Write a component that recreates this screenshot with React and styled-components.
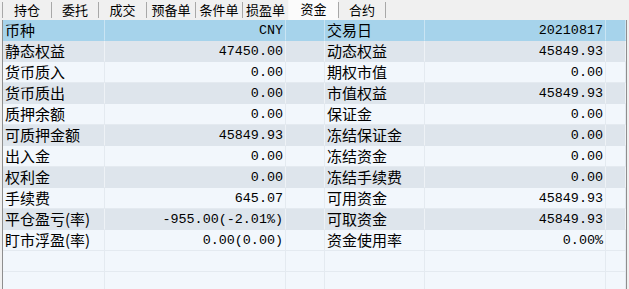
import React from "react";
import styled, { createGlobalStyle } from "styled-components";

const tabs = [
  { name: "持仓", w: 49 },
  { name: "委托", w: 47 },
  { name: "成交", w: 48 },
  { name: "预备单", w: 49 },
  { name: "条件单", w: 47 },
  { name: "损盈单", w: 46 },
  { name: "资金", w: 50, active: true },
  { name: "合约", w: 48 },
];

const rows = [
  ["静态权益", "47450.00", "动态权益", "45849.93"],
  ["货币质入", "0.00", "期权市值", "0.00"],
  ["货币质出", "0.00", "市值权益", "45849.93"],
  ["质押余额", "0.00", "保证金", "0.00"],
  ["可质押金额", "45849.93", "冻结保证金", "0.00"],
  ["出入金", "0.00", "冻结资金", "0.00"],
  ["权利金", "0.00", "冻结手续费", "0.00"],
  ["手续费", "645.07", "可用资金", "45849.93"],
  ["平仓盈亏(率)", "-955.00(-2.01%)", "可取资金", "45849.93"],
  ["盯市浮盈(率)", "0.00(0.00)", "资金使用率", "0.00%"],
];

export default function App() {
  return (
    <>
      <GlobalStyle />
      <Frame>
        <TabBar>
          {tabs.map((t) => (
            <Tab key={t.name} $w={t.w} $active={t.active}>
              {t.name}
            </Tab>
          ))}
        </TabBar>
        <Grid>
          <Row $tone="head">
            <Label>币种</Label>
            <Value>CNY</Value>
            <Cell />
            <Label>交易日</Label>
            <Value>20210817</Value>
            <Cell />
          </Row>
          {rows.map((r, i) => (
            <Row key={r[0]} $tone={i % 2 === 0 ? "dark" : "light"}>
              <Label>{r[0]}</Label>
              <Value>{r[1]}</Value>
              <Cell />
              <Label>{r[2]}</Label>
              <Value>{r[3]}</Value>
              <Cell />
            </Row>
          ))}
          {[0, 1].map((k) => (
            <Row key={k} $tone="empty">
              <Cell />
              <Cell />
              <Cell />
              <Cell />
              <Cell />
              <Cell />
            </Row>
          ))}
        </Grid>
      </Frame>
    </>
  );
}

// Styles
const GlobalStyle = createGlobalStyle`
  body {
    margin: 0;
    background: #f0f0f0;
    font-family: "Noto Sans CJK SC", "Noto Sans", sans-serif;
  }
`;

const Frame = styled.div`
  width: 629px;
  height: 289px;
  display: flex;
  flex-direction: column;
  overflow: hidden;
  background: #f0f0f0;
`;

const TabBar = styled.div`
  height: 20px;
  flex: none;
  display: flex;
  align-items: stretch;
  padding-left: 2px;
`;

const Tab = styled.div`
  width: ${(p) => p.$w}px;
  box-sizing: border-box;
  display: flex;
  align-items: center;
  justify-content: center;
  font-size: 13px;
  line-height: 16px;
  color: #000;
  border-left: 1px solid ${(p) => (p.$active ? "#f8f8f8" : "#a8a8a8")};
  margin: ${(p) => (p.$active ? "0" : "2px 0 2px")};
  background: ${(p) => (p.$active ? "#fbfbfb" : "transparent")};
  padding-bottom: ${(p) => (p.$active ? "3px" : "0")};

  &:last-child {
    border-right: 1px solid #a8a8a8;
  }
`;

const Grid = styled.div`
  flex: 1;
  margin: 0 2px 0 2px;
  border-left: 1px solid #8e8e8e;
  border-right: 1px solid #8e8e8e;
  background: #f2f7fc;
  overflow: hidden;
`;

const tones = {
  head: "#a6d3eb",
  dark: "#dee5ec",
  light: "#f2f7fc",
  empty: "#f2f7fc",
};

const lines = {
  head: "#c9e4f3",
  dark: "#eef2f6",
  light: "#e4eaf0",
  empty: "#e4eaf0",
};

const Row = styled.div`
  display: grid;
  grid-template-columns: 102px 181px 39px 100px 181px 20px;
  height: 21px;
  background: ${(p) => tones[p.$tone]};
  color: #000;

  & > * {
    border-right: 1px solid ${(p) => lines[p.$tone]};
    border-bottom: 1px solid ${(p) => (p.$tone === "light" || p.$tone === "empty" ? "#e4eaf0" : "transparent")};
  }
`;

const Cell = styled.div`
  box-sizing: border-box;
  height: 21px;
  overflow: hidden;
  white-space: nowrap;
`;

const Label = styled(Cell)`
  font-size: 15px;
  line-height: 20px;
  padding-left: 2px;
`;

const Value = styled(Cell)`
  font-family: "Liberation Mono", "DejaVu Sans Mono", monospace;
  font-size: 13.4px;
  line-height: 21px;
  text-align: right;
  padding-right: 2px;
`;
